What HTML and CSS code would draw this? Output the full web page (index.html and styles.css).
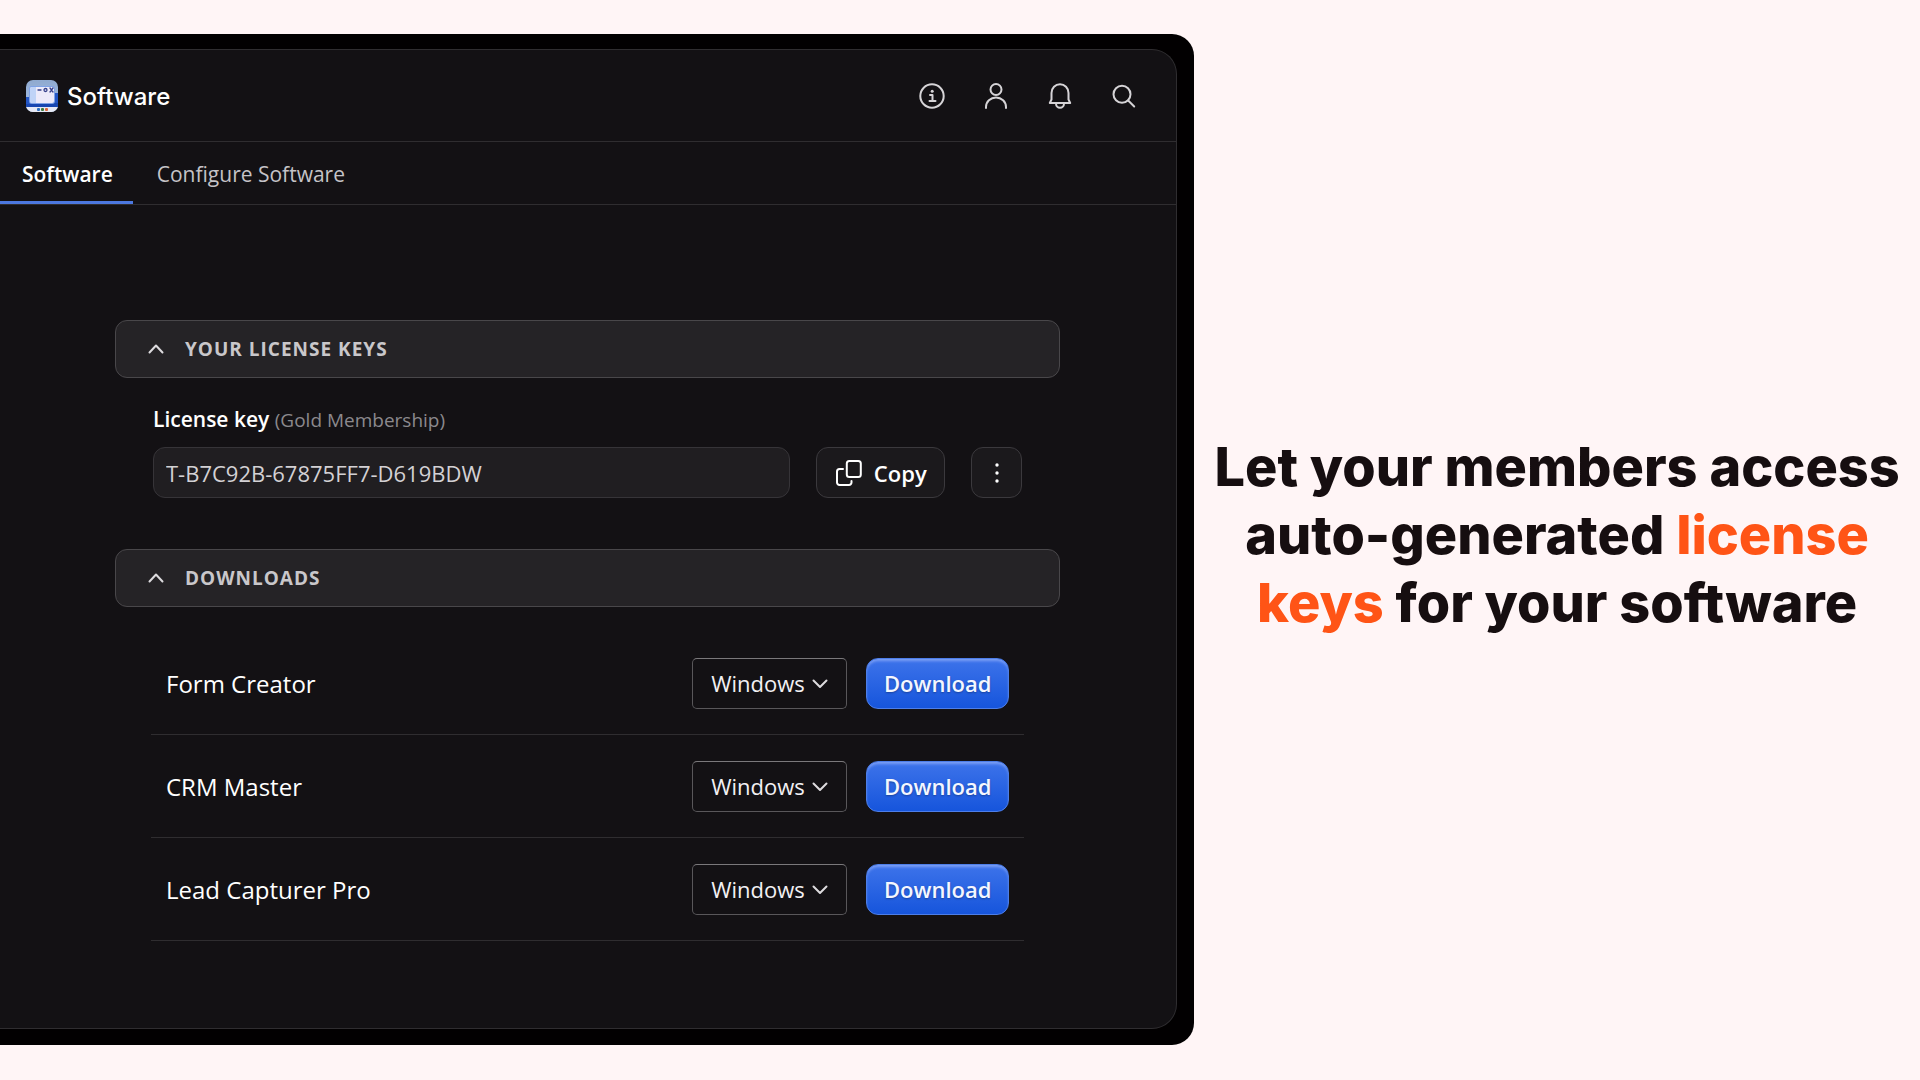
FILE: index.html
```html
<!DOCTYPE html>
<html lang="en">
<head>
  <meta charset="UTF-8">
  <meta name="viewport" content="width=device-width, initial-scale=1.0">
  <title>Software - License Keys</title>
  <link rel="stylesheet" href="styles.css">
</head>
<body>
  <div class="device">
    <div class="screen">
      <header class="topbar">
        <div class="brand">
          <svg class="brand-logo" viewBox="0 0 32 32" aria-hidden="true">
            <defs>
              <clipPath id="logoClip"><rect width="32" height="32" rx="7"/></clipPath>
              <linearGradient id="logoSky" x1="0" y1="0" x2="0" y2="1">
                <stop offset="0" stop-color="#8fa9cf"/>
                <stop offset="1" stop-color="#a9c4ea"/>
              </linearGradient>
            </defs>
            <g clip-path="url(#logoClip)">
              <rect width="32" height="32" fill="url(#logoSky)"/>
              <path d="M0 17h4v-2l24-2h4v14H0z" fill="#2456c4"/>
              <path d="M0 24h13v-1h19v4H0z" fill="#1746b0"/>
              <rect y="27" width="32" height="5" fill="#e6e9f5"/>
              <rect x="3" y="6" width="26" height="18" rx="3" fill="#7fa2e6"/>
              <rect x="4" y="7" width="24" height="16" rx="2" fill="#eceafa"/>
              <path d="M6 7h4v16H6a2 2 0 0 1-2-2V9a2 2 0 0 1 2-2z" fill="#bfd3f7"/>
              <path d="M12 10h3M24 8l3 4M27 8l-3 4" stroke="#35408a" stroke-width="1.3"/>
              <circle cx="19.500" cy="10" r="1.500" fill="none" stroke="#35408a" stroke-width="1.3"/>
              <rect x="11" y="28" width="3" height="3" rx="1" fill="#2f6fc0"/>
              <rect x="15" y="28" width="3" height="3" rx="1" fill="#3f7d3c"/>
              <rect x="19" y="28" width="3" height="3" rx="1" fill="#d9663c"/>
            </g>
          </svg>
          <span class="brand-name">Software</span>
        </div>
        <div class="actions">
          <button class="icon-btn" aria-label="Info">
            <svg viewBox="0 0 28 28">
              <circle cx="14" cy="14" r="11.700"/>
              <path d="M12 13h2.500v6M11.500 19h6"/>
              <circle class="dot" cx="14.200" cy="9.300" r="1.500"/>
            </svg>
          </button>
          <button class="icon-btn" aria-label="Profile">
            <svg viewBox="0 0 28 28">
              <circle cx="14" cy="7.500" r="5.500"/>
              <path d="M4 26v-1a10 9.500 0 0 1 20 0v1"/>
            </svg>
          </button>
          <button class="icon-btn" aria-label="Notifications">
            <svg viewBox="0 0 28 28">
              <path d="M5.500 17.500V11a8.500 8.800 0 0 1 17 0v6.500l1.700 3.500H3.800z"/>
              <path d="M10 21.500a4 4.300 0 0 0 8 0"/>
            </svg>
          </button>
          <button class="icon-btn" aria-label="Search">
            <svg viewBox="0 0 28 28">
              <circle cx="12" cy="12.300" r="8.500"/>
              <path d="M18.200 18.500l6 6"/>
            </svg>
          </button>
        </div>
      </header>

      <nav class="tabs">
        <a class="tab active" href="#software">Software</a>
        <a class="tab" href="#configure">Configure Software</a>
      </nav>

      <main class="content">
        <button class="section-head" aria-expanded="true">
          <svg class="chevron" viewBox="0 0 16 10"><path d="M1.500 8.500L8 1.500l6.500 7"/></svg>
          <span>YOUR LICENSE KEYS</span>
        </button>

        <section class="license">
          <label class="license-label" for="licenseKey">License key <small>(Gold Membership)</small></label>
          <div class="license-row">
            <input class="license-input" type="text" id="licenseKey" value="T-B7C92B-67875FF7-D619BDW" readonly>
            <button class="btn-dark copy-btn">
              <svg viewBox="0 0 28 28">
                <rect x="11.800" y="2" width="14" height="16" rx="2.500"/>
                <path d="M8 10H4.500A2.500 2.500 0 0 0 2 12.500v11A2.500 2.500 0 0 0 4.500 26h9.500a2.500 2.500 0 0 0 2.500-2.500V22"/>
              </svg>
              Copy
            </button>
            <button class="btn-dark more-btn" aria-label="More">
              <svg viewBox="0 0 28 28">
                <circle cx="14" cy="6" r="1.700"/>
                <circle cx="14" cy="14" r="1.700"/>
                <circle cx="14" cy="22" r="1.700"/>
              </svg>
            </button>
          </div>
        </section>

        <button class="section-head" aria-expanded="true">
          <svg class="chevron" viewBox="0 0 16 10"><path d="M1.500 8.500L8 1.500l6.500 7"/></svg>
          <span>DOWNLOADS</span>
        </button>

        <ul class="downloads">
          <li class="download">
            <label class="download-name" for="os1">Form Creator</label>
            <div class="os-select">
              <select id="os1"><option>Windows</option><option>macOS</option></select>
              <svg class="chevron" viewBox="0 0 16 10"><path d="M1.500 1.500L8 8l6.500-6.500"/></svg>
            </div>
            <button class="btn-primary">Download</button>
          </li>
          <li class="download">
            <label class="download-name" for="os2">CRM Master</label>
            <div class="os-select">
              <select id="os2"><option>Windows</option><option>macOS</option></select>
              <svg class="chevron" viewBox="0 0 16 10"><path d="M1.500 1.500L8 8l6.500-6.500"/></svg>
            </div>
            <button class="btn-primary">Download</button>
          </li>
          <li class="download">
            <label class="download-name" for="os3">Lead Capturer Pro</label>
            <div class="os-select">
              <select id="os3"><option>Windows</option><option>macOS</option></select>
              <svg class="chevron" viewBox="0 0 16 10"><path d="M1.500 1.500L8 8l6.500-6.500"/></svg>
            </div>
            <button class="btn-primary">Download</button>
          </li>
        </ul>
      </main>
    </div>
  </div>

  <div class="pitch">
    <h1>Let your members access auto-generated <em>license</em> <em>keys</em> for your software</h1>
  </div>
</body>
</html>
```
FILE: styles.css
```css
* {
  box-sizing: border-box;
}

body {
  margin: 0;
  min-height: 100vh;
  padding: 34px 0 35px;
  display: grid;
  grid-template-columns: 62.2% 1fr;
  background: #fff5f6;
  color: #160e10;
  font-family: "Open Sans", "Noto Sans", sans-serif;
}

button, input, select {
  font-family: inherit;
}

button {
  cursor: pointer;
}

svg {
  display: block;
  fill: none;
  stroke-linecap: round;
  stroke-linejoin: round;
}

/* device frame, runs off the left edge */
.device {
  display: flex;
  background: #020001;
  border-radius: 0 22px 22px 0;
  padding: 15px 17px 16px 0;
}

.screen {
  flex: 1;
  min-width: 0;
  background: #131114;
  border: 1px solid #2f2d30;
  border-left: 0;
  border-radius: 0 25px 25px 0;
  color: #fff;
}

/* top bar */
.topbar {
  display: flex;
  align-items: center;
  justify-content: space-between;
  height: 92px;
  padding: 0 38px 0 26px;
  border-bottom: 1px solid #2f2d30;
}

.brand {
  display: flex;
  align-items: center;
  gap: 9px;
}

.brand-logo {
  width: 32px;
  height: 32px;
}

.brand-name {
  padding-top: 2px;
  font-family: Inter, sans-serif;
  font-size: 24px;
  font-weight: 500;
}

.actions {
  display: flex;
  gap: 36px;
}

.icon-btn {
  padding: 0;
  border: 0;
  background: none;
}

.icon-btn svg {
  width: 28px;
  height: 28px;
  stroke: #d6d4d7;
  stroke-width: 2;
}

.icon-btn .dot {
  fill: #d6d4d7;
  stroke: none;
}

/* tabs */
.tabs {
  display: flex;
  border-bottom: 1px solid #2f2d30;
}

.tab {
  height: 62px;
  padding: 0 24px;
  border-bottom: 3px solid transparent;
  color: #c5c3c7;
  font-size: 21px;
  line-height: 64px;
  text-decoration: none;
}

.tab.active {
  padding: 0 20px 0 22px;
  border-color: #4c78e0;
  color: #fff;
  font-weight: 600;
}

/* content */
.content {
  padding: 115px 116px 0 115px;
}

.section-head {
  display: flex;
  align-items: center;
  gap: 21px;
  width: 100%;
  height: 58px;
  padding: 0 32px;
  background: #252326;
  border: 1px solid #49474a;
  border-radius: 12px;
  color: #c9c7ca;
  font-size: 19px;
  font-weight: 700;
  letter-spacing: 1px;
}

.chevron {
  width: 16px;
  height: 10px;
  stroke: #dddbde;
  stroke-width: 2;
}

.license {
  padding: 26px 38px 51px;
}

.license-label {
  display: block;
  margin-bottom: 12px;
  font-size: 21px;
  font-weight: 600;
  line-height: 30px;
}

.license-label small {
  color: #8b898d;
  font-size: 19px;
  font-weight: 500;
}

.license-row {
  display: flex;
  gap: 26px;
}

.license-input {
  flex: 1;
  min-width: 0;
  height: 51px;
  padding: 0 12px;
  background: #201e21;
  border: 1px solid #363438;
  border-radius: 12px;
  color: #d3d1d4;
  font-size: 22px;
}

.btn-dark {
  display: flex;
  align-items: center;
  justify-content: center;
  height: 51px;
  padding: 0;
  background: #1b191c;
  border: 1px solid #3b393d;
  border-radius: 12px;
  color: #fff;
  font-size: 22px;
  font-weight: 600;
}

.btn-dark svg {
  width: 28px;
  height: 28px;
  stroke: #fff;
  stroke-width: 2;
}

.copy-btn {
  gap: 11px;
  width: 129px;
}

.more-btn {
  width: 51px;
}

.more-btn svg {
  fill: #fff;
  stroke: none;
}

/* downloads */
.downloads {
  margin: 0;
  padding: 25px 36px 0;
  list-style: none;
}

.download {
  display: flex;
  align-items: center;
  gap: 19px;
  height: 103px;
  padding: 0 15px;
  border-bottom: 1px solid #2f2d30;
}

.download-name {
  flex: 1;
  font-size: 24px;
}

.os-select {
  position: relative;
}

.os-select select {
  appearance: none;
  width: 155px;
  height: 51px;
  padding: 0 40px 0 18px;
  background: #131114;
  border: 1px solid #59575a;
  border-top-color: #7a787b;
  border-radius: 5px;
  color: #f2f0f3;
  font-size: 22px;
}

.os-select .chevron {
  position: absolute;
  top: 21px;
  right: 19px;
  pointer-events: none;
}

.btn-primary {
  width: 143px;
  height: 51px;
  padding: 0;
  background: linear-gradient(#3d73ea, #1655dc);
  border: 1px solid #4d7ee8;
  border-radius: 12px;
  box-shadow: inset 0 3px 3px -1px #7c9ff5;
  color: #f4f7ff;
  font-size: 22px;
  font-weight: 600;
  text-shadow: 0 1px 2px rgba(0,0,0,0.3);
}

/* headline */
.pitch {
  display: flex;
  align-items: center;
  padding: 0 12px 10px;
  text-align: center;
}

.pitch h1 {
  margin: 0;
  font-family: Inter, sans-serif;
  font-size: 54px;
  font-weight: 800;
  line-height: 68px;
}

.pitch em {
  color: #ff5416;
  font-style: normal;
}
```
